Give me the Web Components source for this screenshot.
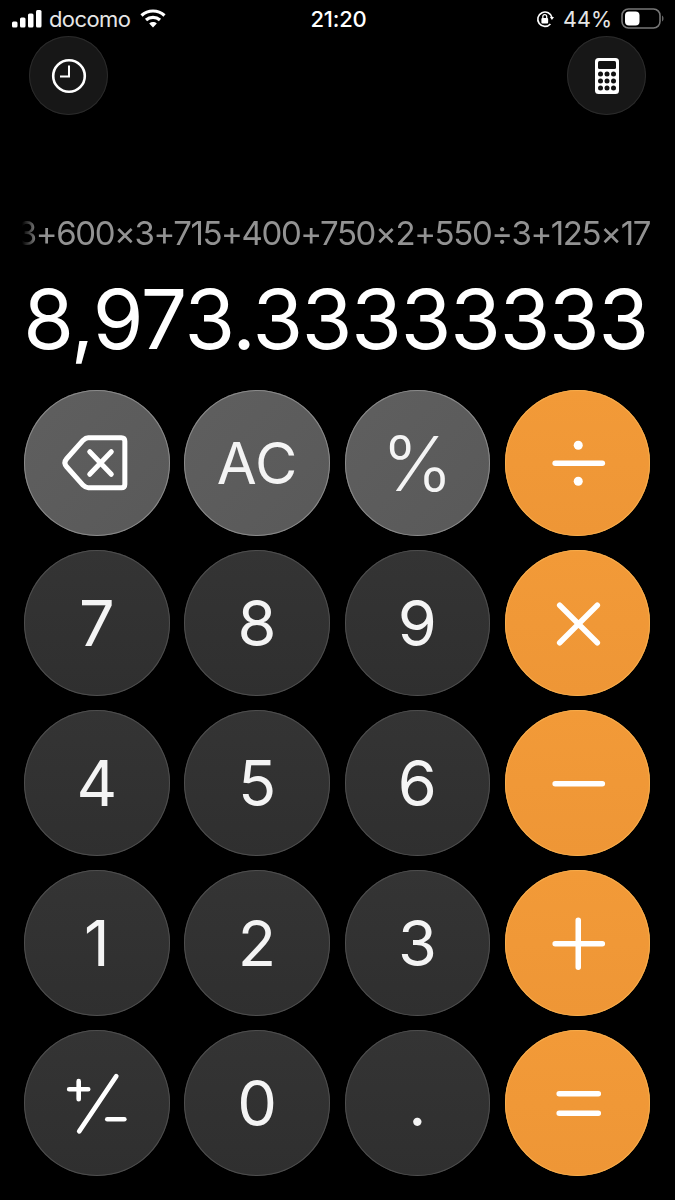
<!DOCTYPE html>
<html lang="en">
  <head>
    <meta charset="UTF-8" />
    <title>Calculator</title>
    <style>
      html,
      body {
        margin: 0;
        background: #000;
      }
      body {
        font-family: Inter, "Liberation Sans", sans-serif;
      }
      svg {
        display: block;
      }
    </style>
  </head>
  <body>
    <calc-app>
      <status-bar slot="status"></status-bar>
      <round-action slot="left">
        <svg width="40" height="40" viewBox="0 0 40 40" fill="none" stroke="#fff" stroke-width="2.6">
          <circle cx="20" cy="20" r="15.8" />
          <path d="M20 9.5V20.5H11" stroke-width="2" />
        </svg>
      </round-action>
      <round-action slot="right">
        <svg width="26" height="38" viewBox="0 0 26 38">
          <rect x="1" y="1" width="24" height="36" rx="3.5" fill="#fff" />
          <rect x="4" y="4" width="18" height="8" rx="1.5" fill="#111" />
          <g fill="#111">
            <circle cx="6.5" cy="17" r="2.5" /><circle cx="13" cy="17" r="2.5" /><circle cx="19.5" cy="17" r="2.5" />
            <circle cx="6.5" cy="24" r="2.5" /><circle cx="13" cy="24" r="2.5" /><circle cx="19.5" cy="24" r="2.5" />
            <circle cx="6.5" cy="31" r="2.5" /><circle cx="13" cy="31" r="2.5" /><circle cx="19.5" cy="31" r="2.5" />
          </g>
        </svg>
      </round-action>
      <calc-display slot="display" expression="3+600×3+715+400+750×2+550÷3+125×17" value="8,973.33333333"></calc-display>
      <calc-keypad slot="keypad">
        <calc-key kind="fn" aria-label="delete">
          <svg viewBox="0 0 145 145" fill="none" stroke="#fff" stroke-width="5" stroke-linecap="round" stroke-linejoin="round">
            <path d="M42.5 68.5 59 50Q61.5 47.5 64 47.5H97Q100.5 47.5 100.5 51V94Q100.5 97.5 97 97.5H64Q61.5 97.5 59 95L42.5 76.5Q39 72.5 42.5 68.5Z" />
            <path d="M65.5 61.5 87 84M87 61.5 65.5 84" />
          </svg>
        </calc-key>
        <calc-key kind="fn">AC</calc-key>
        <calc-key kind="fn" style="font-size: 76px; font-weight: 300">%</calc-key>
        <calc-key kind="op" aria-label="÷">
          <svg viewBox="0 0 145 145" fill="#fff" stroke="#fff" stroke-width="5.5" stroke-linecap="round">
            <path d="M50 73H97" />
            <circle cx="73" cy="55" r="4.5" stroke="none" /><circle cx="73" cy="91" r="4.5" stroke="none" />
          </svg>
        </calc-key>

        <calc-key>7</calc-key>
        <calc-key>8</calc-key>
        <calc-key>9</calc-key>
        <calc-key kind="op" aria-label="×">
          <svg viewBox="0 0 145 145" fill="none" stroke="#fff" stroke-width="5.5" stroke-linecap="round">
            <path d="M54.5 55 92 92.5M92 55 54.5 92.5" />
          </svg>
        </calc-key>

        <calc-key>4</calc-key>
        <calc-key>5</calc-key>
        <calc-key>6</calc-key>
        <calc-key kind="op" aria-label="−">
          <svg viewBox="0 0 145 145" fill="none" stroke="#fff" stroke-width="5.5" stroke-linecap="round">
            <path d="M50 73.5H97" />
          </svg>
        </calc-key>

        <calc-key>1</calc-key>
        <calc-key>2</calc-key>
        <calc-key>3</calc-key>
        <calc-key kind="op" aria-label="+">
          <svg viewBox="0 0 145 145" fill="none" stroke="#fff" stroke-width="5.5" stroke-linecap="round">
            <path d="M50 73.5H97M73 50V97" />
          </svg>
        </calc-key>

        <calc-key aria-label="plus minus">
          <svg viewBox="0 0 145 145" fill="none" stroke="#fff" stroke-width="4.6" stroke-linecap="round">
            <path d="M45 59H64M54.5 51V69" />
            <path d="M92 46 55 101" />
            <path d="M83 89H100" />
          </svg>
        </calc-key>
        <calc-key>0</calc-key>
        <calc-key>.</calc-key>
        <calc-key kind="op" aria-label="=">
          <svg viewBox="0 0 145 145" fill="none" stroke="#fff" stroke-width="5.5" stroke-linecap="round">
            <path d="M54 63.5H93M54 83H93" />
          </svg>
        </calc-key>
      </calc-keypad>
    </calc-app>

    <template id="status-bar-template">
      <style>
        :host {
          display: grid;
          grid-template-columns: 1fr auto 1fr;
          align-items: center;
          height: 36px;
          padding: 1px 10px 0 12px;
          color: #fff;
          font-size: 22px;
          box-sizing: border-box;
        }
        .left,
        .right {
          display: flex;
          align-items: center;
        }
        .right {
          justify-content: flex-end;
        }
        .carrier {
          margin: 0 10px 0 7px;
          color: #e6e6e6;
          letter-spacing: -0.6px;
        }
        .time {
          font-weight: 500;
          letter-spacing: -0.2px;
        }
        .pct {
          margin: 0 9px;
          color: #e6e6e6;
          font-size: 21.5px;
        }
        svg {
          display: block;
        }
      </style>
      <div class="left">
        <svg width="30" height="18" viewBox="0 0 30 18" fill="#fff">
          <rect x="0" y="11.5" width="5.5" height="6" rx="1.5" />
          <rect x="8" y="7.5" width="5.5" height="10" rx="1.5" />
          <rect x="16" y="3.5" width="5.5" height="14" rx="1.5" />
          <rect x="24" y="0" width="5.5" height="17.5" rx="1.5" />
        </svg>
        <span class="carrier">docomo</span>
        <svg width="26" height="19" viewBox="0 0 26 19" fill="none" stroke="#fff" stroke-width="3.2">
          <path d="M1.5 6.5C8 .5 18 .5 24.5 6.5" />
          <path d="M6 11C10 7.4 16 7.4 20 11" />
          <path d="M13 18.5 9.2 14.4C11.4 12.6 14.6 12.6 16.8 14.4Z" fill="#fff" stroke="none" />
        </svg>
      </div>
      <div class="time">21:20</div>
      <div class="right">
        <svg width="18" height="18" viewBox="0 0 20 20" fill="none" stroke="#fff" stroke-width="1.8">
          <path d="M17.8 8.5A8 8 0 1 0 16 15.5" />
          <path d="M15.4 7.8H20L17.7 11Z" fill="#fff" stroke="none" />
          <rect x="6" y="9" width="7.5" height="6" rx="1" fill="#fff" stroke="none" />
          <path d="M7.6 9V7.3A2.1 2.1 0 0 1 11.9 7.3V9" stroke-width="1.4" />
        </svg>
        <span class="pct">44%</span>
        <svg width="44" height="21" viewBox="0 0 44 21" fill="none">
          <rect x="1" y="1" width="38" height="19" rx="6.5" stroke="#777" stroke-width="1.6" />
          <rect x="4" y="3.5" width="14.5" height="14" rx="4" fill="#fff" />
          <path d="M41 7.5C43 8.3 43 12.7 41 13.5Z" fill="#666" />
        </svg>
      </div>
    </template>

    <template id="round-action-template">
      <style>
        :host {
          display: flex;
          align-items: center;
          justify-content: center;
          width: 79px;
          height: 79px;
          border-radius: 50%;
          background: #171717;
          box-shadow: inset 0 0 0 1px #2b2b2b;
        }
      </style>
      <slot></slot>
    </template>

    <template id="calc-display-template">
      <style>
        :host {
          display: flex;
          flex-direction: column;
          color: #fff;
        }
        .expression {
          display: flex;
          justify-content: flex-end;
          margin: 0 25px 0 22px;
          overflow: hidden;
          white-space: nowrap;
          font-size: 33px;
          letter-spacing: -1.4px;
          line-height: 38px;
          color: #929292;
          -webkit-mask-image: linear-gradient(to right, transparent, #000 16px);
          mask-image: linear-gradient(to right, transparent, #000 16px);
        }
        .value {
          margin: 18px 27px 0 0;
          text-align: right;
          white-space: nowrap;
          font-size: 82px;
          letter-spacing: -1.2px;
          line-height: 100px;
        }
      </style>
      <div class="expression"><span></span></div>
      <div class="value"></div>
    </template>

    <template id="calc-key-template">
      <style>
        :host {
          display: flex;
          align-items: center;
          justify-content: center;
          width: 145.5px;
          height: 145.5px;
          border-radius: 50%;
          color: #f4f4f4;
          font-size: 63px;
          background: linear-gradient(180deg, #343434, #2f2f2f);
          box-shadow: inset 0 0 0 1px #4e4e4e;
        }
        :host([kind="fn"]) {
          background: linear-gradient(135deg, #5f5f5f, #595959);
          box-shadow: inset 0 0 0 1px #8a8a8a;
          font-size: 58px;
        }
        :host([kind="op"]) {
          background: linear-gradient(180deg, #f29a38, #ee9636);
          box-shadow: inset 0 0 0 1px #f7ad4c;
        }
        ::slotted(svg) {
          width: 100%;
          height: 100%;
        }
      </style>
      <slot></slot>
    </template>

    <template id="calc-keypad-template">
      <style>
        :host {
          display: grid;
          grid-template-columns: repeat(4, 145.5px);
          grid-auto-rows: 145.5px;
          column-gap: 14.8px;
          row-gap: 14.6px;
          padding: 0 24px;
        }
      </style>
      <slot></slot>
    </template>

    <template id="calc-app-template">
      <style>
        :host {
          display: flex;
          flex-direction: column;
          width: 675px;
          height: 1200px;
          overflow: hidden;
          background: #000;
        }
        .actions {
          display: flex;
          justify-content: space-between;
          padding: 0 29px;
        }
        .display {
          padding-top: 99px;
        }
        .keypad {
          padding-top: 20px;
        }
      </style>
      <slot name="status"></slot>
      <div class="actions">
        <slot name="left"></slot>
        <slot name="right"></slot>
      </div>
      <div class="display"><slot name="display"></slot></div>
      <div class="keypad"><slot name="keypad"></slot></div>
    </template>

    <script>
      class ShadowTemplate extends HTMLElement {
        constructor(templateId) {
          super();
          const template = document.getElementById(templateId);
          const shadow = this.attachShadow({ mode: "open" });
          shadow.appendChild(template.content.cloneNode(true));
        }
      }

      class StatusBar extends ShadowTemplate {
        constructor() {
          super("status-bar-template");
        }
      }
      customElements.define("status-bar", StatusBar);

      class RoundAction extends ShadowTemplate {
        constructor() {
          super("round-action-template");
        }
      }
      customElements.define("round-action", RoundAction);

      class CalcDisplay extends ShadowTemplate {
        constructor() {
          super("calc-display-template");
        }
        connectedCallback() {
          this.shadowRoot.querySelector(".expression span").textContent = this.getAttribute("expression");
          this.shadowRoot.querySelector(".value").textContent = this.getAttribute("value");
        }
      }
      customElements.define("calc-display", CalcDisplay);

      class CalcKey extends ShadowTemplate {
        constructor() {
          super("calc-key-template");
        }
      }
      customElements.define("calc-key", CalcKey);

      class CalcKeypad extends ShadowTemplate {
        constructor() {
          super("calc-keypad-template");
        }
      }
      customElements.define("calc-keypad", CalcKeypad);

      class CalcApp extends ShadowTemplate {
        constructor() {
          super("calc-app-template");
        }
      }
      customElements.define("calc-app", CalcApp);
    </script>
  </body>
</html>
